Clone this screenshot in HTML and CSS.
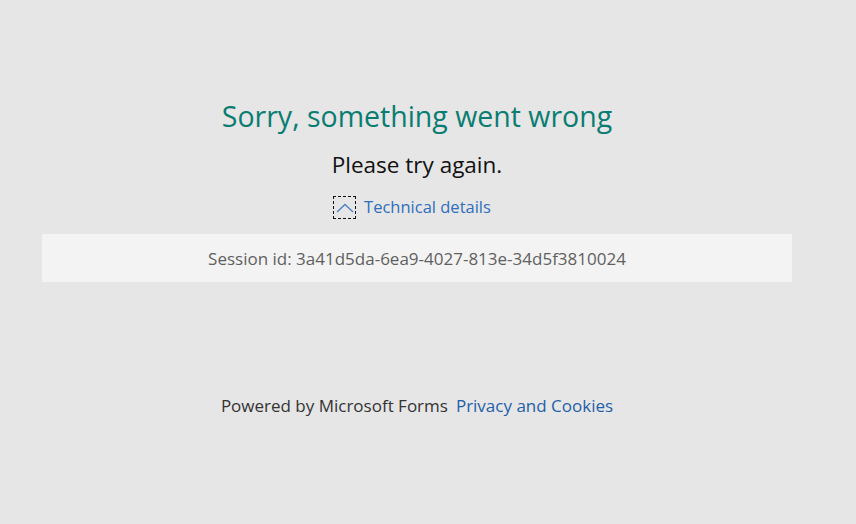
FILE: index.html
```html
<!DOCTYPE html>
<html>
<head>
<meta charset="utf-8">
<link rel="stylesheet" href="styles.css">
</head>
<body>
<main class="page">
  <h1 class="title">Sorry, something went wrong</h1>
  <p class="subtitle">Please try again.</p>
  <div class="details-toggle">
    <span class="chevron-box">
      <svg width="18" height="10" viewBox="0 0 18 10"><path d="M1 9 L9 1.5 L17 9" fill="none" stroke="#4a7fc9" stroke-width="1.3"/></svg>
    </span>
    <a class="details-link">Technical details</a>
  </div>
  <div class="session">Session id: 3a41d5da-6ea9-4027-813e-34d5f3810024</div>
  <footer class="footer">
    <span class="powered">Powered by Microsoft Forms</span>
    <a class="privacy">Privacy and Cookies</a>
  </footer>
</main>
</body>
</html>
```
FILE: styles.css
```css
html, body {
  margin: 0;
  padding: 0;
  background: #e6e6e6;
  height: 100%;
}
body {
  font-family: "Open Sans", "Noto Sans", sans-serif;
}
.page {
  width: 750px;
  margin-left: 42px;
  padding-top: 96px;
  display: flex;
  flex-direction: column;
  align-items: center;
}
.title {
  margin: 0;
  font-weight: 400;
  font-size: 28.5px;
  line-height: 40px;
  color: #0a7d72;
}
.subtitle {
  margin: 14px 0 0;
  font-size: 22.5px;
  line-height: 30px;
  color: #111;
}
.details-toggle {
  margin-top: 15px;
  padding-right: 10px;
  display: flex;
  align-items: center;
  gap: 8px;
}
.chevron-box {
  width: 23px;
  height: 23px;
  box-sizing: border-box;
  border: 1px dashed #111;
  display: flex;
  align-items: flex-end;
  justify-content: center;
  padding-bottom: 5px;
}
.chevron-box svg { display: block; }
.details-link {
  font-size: 16.5px;
  line-height: 24px;
  color: #2f6ebd;
}
.session {
  align-self: stretch;
  margin-top: 15px;
  height: 48px;
  background: #f3f3f3;
  display: flex;
  align-items: center;
  justify-content: center;
  font-size: 17px;
  color: #5f5f5f;
}
.footer {
  margin-top: 112px;
  display: flex;
  gap: 8px;
  font-size: 17px;
  line-height: 24px;
}
.powered { color: #333; }
.privacy { color: #1f5fa8; }
```
